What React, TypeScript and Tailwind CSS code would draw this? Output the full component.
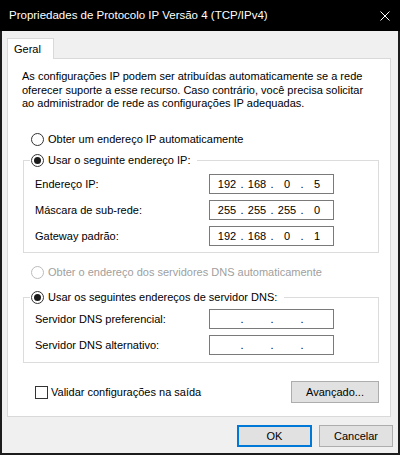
import React from "react";

function Radio({ checked, disabled }: { checked?: boolean; disabled?: boolean }) {
  return (
    <span
      className={
        "w-[13px] h-[13px] rounded-full border bg-white flex items-center justify-center shrink-0 " +
        (disabled ? "border-[#bcbcbc]" : "border-[#333333]")
      }
    >
      {checked && <span className="w-[7px] h-[7px] rounded-full bg-[#1a1a1a]" />}
    </span>
  );
}

function IpBox({ parts }: { parts: string[] }) {
  return (
    <div className="w-[125px] h-[20px] border border-[#7a7a7a] bg-white flex items-center pl-[4px] text-black">
      {parts.map((p, i) => (
        <React.Fragment key={i}>
          <span className="w-[26px] text-center leading-[18px]">{p}</span>
          {i < 3 && <span className="w-[4px] text-center leading-[18px]">.</span>}
        </React.Fragment>
      ))}
    </div>
  );
}

function Row({ label, parts }: { label: string; parts: string[] }) {
  return (
    <div className="flex items-center h-[20px] pl-[11px]">
      <span className="w-[174px]">{label}</span>
      <IpBox parts={parts} />
    </div>
  );
}

export default function App() {
  return (
    <div className="w-[400px] h-[455px] bg-[#1c1c1c] flex flex-col font-['Liberation_Sans',Arial,sans-serif] text-[11px] text-black overflow-hidden">
      <div className="h-[31px] bg-black flex items-center justify-between pl-[9px] pr-[10px] shrink-0">
        <span className="text-white text-[11.5px]">Propriedades de Protocolo IP Versão 4 (TCP/IPv4)</span>
        <svg width="10" height="10" viewBox="0 0 10 10" className="block">
          <path d="M0.5 0.5 L9.5 9.5 M9.5 0.5 L0.5 9.5" stroke="white" strokeWidth="1" />
        </svg>
      </div>
      <div className="flex-1 mx-[2px] mb-[2px] bg-[#f0f0f0] flex flex-col">
        <div className="pl-[5px] pr-[7px] pt-[7px]">
          <div className="w-[47px] h-[21px] bg-white border-t border-x border-[#d9d9d9] relative z-10 -mb-[1px] pl-[6px] flex items-center">
            Geral
          </div>
          <div className="h-[359px] bg-white border border-[#d9d9d9] flex flex-col">
            <div className="pt-[11px] pl-[14px] h-[52px] leading-[13.5px]">
              <div>As configurações IP podem ser atribuídas automaticamente se a rede</div>
              <div>oferecer suporte a esse recurso. Caso contrário, você precisa solicitar</div>
              <div>ao administrador de rede as configurações IP adequadas.</div>
            </div>
            <div className="mt-[20px] h-[16px] flex items-center gap-[4px] pl-[23px]">
              <Radio />
              <span>Obter um endereço IP automaticamente</span>
            </div>
            <fieldset className="mt-[5px] ml-[15px] mr-[11px] border border-[#dcdcdc] pb-[6px]">
              <legend className="ml-[6px] pl-[1px] pr-[7px] h-[16px] flex items-center gap-[4px]">
                <Radio checked />
                <span>Usar o seguinte endereço IP:</span>
              </legend>
              <div className="mt-[6px] flex flex-col gap-[6px]">
                <Row label="Endereço IP:" parts={["192", "168", "0", "5"]} />
                <Row label="Máscara de sub-rede:" parts={["255", "255", "255", "0"]} />
                <Row label="Gateway padrão:" parts={["192", "168", "0", "1"]} />
              </div>
            </fieldset>
            <div className="mt-[11px] h-[16px] flex items-center gap-[4px] pl-[23px] text-[#a0a0a0]">
              <Radio disabled />
              <span>Obter o endereço dos servidores DNS automaticamente</span>
            </div>
            <fieldset className="mt-[9px] ml-[15px] mr-[11px] border border-[#dcdcdc] pb-[7px]">
              <legend className="ml-[6px] pl-[1px] pr-[7px] h-[16px] flex items-center gap-[4px]">
                <Radio checked />
                <span>Usar os seguintes endereços de servidor DNS:</span>
              </legend>
              <div className="mt-[4px] flex flex-col gap-[6px]">
                <Row label="Servidor DNS preferencial:" parts={["", "", "", ""]} />
                <Row label="Servidor DNS alternativo:" parts={["", "", "", ""]} />
              </div>
            </fieldset>
            <div className="mt-[18px] ml-[15px] mr-[11px] h-[22px] flex items-center justify-between pl-[12px]">
              <div className="flex items-center gap-[3px]">
                <span className="w-[13px] h-[13px] border border-[#333333] bg-white shrink-0" />
                <span>Validar configurações na saída</span>
              </div>
              <button className="w-[88px] h-[22px] bg-[#e1e1e1] border border-[#adadad] flex items-center justify-center">
                Avançado...
              </button>
            </div>
          </div>
        </div>
        <div className="mt-[8px] flex justify-end gap-[7px] pr-[5px]">
          <button className="w-[75px] h-[22px] bg-[#e1e1e1] border-2 border-[#0078d7] flex items-center justify-center">
            OK
          </button>
          <button className="w-[74px] h-[22px] bg-[#e1e1e1] border border-[#adadad] flex items-center justify-center">
            Cancelar
          </button>
        </div>
      </div>
    </div>
  );
}
